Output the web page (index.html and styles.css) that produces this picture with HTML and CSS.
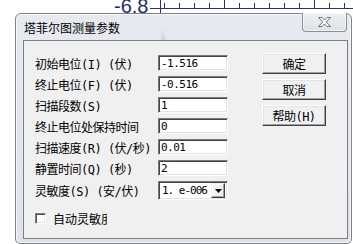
FILE: index.html
```html
<!DOCTYPE html>
<html lang="zh-CN">
<head>
    <meta charset="UTF-8">
    <title>塔菲尔图测量参数</title>
    <link rel="stylesheet" href="styles.css">
</head>
<body>
<div class="desk">
    <!-- chart behind the dialog -->
    <svg class="chart" width="353" height="244" viewBox="0 0 353 244">
        <text x="114" y="13" class="axis_num">-6.8</text>
        <line x1="150" y1="8.5" x2="353" y2="8.5" class="axis"/>
        <line x1="160.5" y1="0" x2="160.5" y2="244" class="axis"/>
        <g class="axis">
            <line x1="164.5" y1="3" x2="164.5" y2="8"/>
            <line x1="179.5" y1="3" x2="179.5" y2="8"/>
            <line x1="194.5" y1="3" x2="194.5" y2="8"/>
            <line x1="209.5" y1="3" x2="209.5" y2="8"/>
            <line x1="224.5" y1="0" x2="224.5" y2="8"/>
            <line x1="239.5" y1="3" x2="239.5" y2="8"/>
            <line x1="254.5" y1="3" x2="254.5" y2="8"/>
            <line x1="269.5" y1="3" x2="269.5" y2="8"/>
            <line x1="284.5" y1="3" x2="284.5" y2="8"/>
            <line x1="299.5" y1="3" x2="299.5" y2="8"/>
            <line x1="314.5" y1="0" x2="314.5" y2="8"/>
            <line x1="329.5" y1="3" x2="329.5" y2="8"/>
            <line x1="344.5" y1="3" x2="344.5" y2="8"/>
        </g>
    </svg>

    <div class="win">
        <div class="title_bar">
            <span class="title_text">塔菲尔图测量参数</span>
            <div class="close_btn">
                <svg width="15" height="12" viewBox="0 0 15 12">
                    <path d="M1.5 1.5h3.5l2.5 2.6 2.5-2.6h3.5l-4.2 4.5 4.2 4.5h-3.5l-2.5-2.6-2.5 2.6h-3.5l4.2-4.5z" fill="#fafafa" stroke="#6e747c" stroke-width="1" stroke-linejoin="round"/>
                </svg>
            </div>
        </div>

        <div class="client">
            <div class="left_col">
                <div class="form_grid">
                    <label>初始电位(I) (伏)</label>
                    <input type="text" class="field" value="-1.516">
                    <label>终止电位(F) (伏)</label>
                    <input type="text" class="field" value="-0.516">
                    <label>扫描段数(S)</label>
                    <input type="text" class="field" value="1">
                    <label>终止电位处保持时间</label>
                    <input type="text" class="field" value="0">
                    <label>扫描速度(R) (伏/秒)</label>
                    <input type="text" class="field" value="0.01">
                    <label>静置时间(Q) (秒)</label>
                    <input type="text" class="field" value="2">
                    <label>灵敏度(S) (安/伏)</label>
                    <div class="combo">
                        <span class="combo_val">1. e-006</span>
                        <span class="combo_btn">
                            <svg width="7" height="4" viewBox="0 0 7 4"><path d="M0 0h7l-3.5 4z" fill="#000"/></svg>
                        </span>
                    </div>
                </div>
                <div class="check_row">
                    <span class="check_box"></span>
                    <span class="check_text">自动灵敏度</span>
                </div>
            </div>

            <div class="btn_col">
                <button class="win_btn">确定</button>
                <button class="win_btn">取消</button>
                <button class="win_btn">帮助(H)</button>
            </div>
        </div>
    </div>
</div>
</body>
</html>
```

FILE: styles.css
```css
body{
    margin: 0;
    background: #fff;
    font-family: "DejaVu Sans Mono", "Noto Sans CJK SC", sans-serif;
    font-size: 12px;
    color: #000;
}
.desk{
    position: relative;
    width: 353px;
    height: 244px;
    overflow: hidden;
    background: #fff;
}
.chart{
    display: block;
}
.axis_num{
    font-family: "Liberation Sans", sans-serif;
    font-size: 20px;
    fill: #1f2a66;
}
.axis{
    stroke: #27327a;
    stroke-width: 1;
}

/* dialog window */
.win{
    position: absolute;
    left: 15px;
    top: 13px;
    width: 337px;
    height: 231px;
    box-sizing: border-box;
    padding: 0 3px 4px 7px;
    border: 1px solid #7c828a;
    border-radius: 6px 6px 5px 5px;
    background:
        radial-gradient(ellipse 70px 5px at 240px 31px, rgba(232, 160, 170, 0.35), transparent),
        radial-gradient(ellipse 4px 14px at 147px 28px, rgba(120, 130, 200, 0.25), transparent),
        linear-gradient(#e6e9ee, #dfe3e8);
    box-shadow: inset 0 0 0 1px rgba(255, 255, 255, 0.7);
}
.title_bar{
    position: relative;
    height: 26px;
    display: flex;
    align-items: center;
    padding-left: 1px;
}
.title_text{
    font-family: "Noto Sans CJK SC", sans-serif;
    font-size: 12px;
    margin-top: 1px;
}
.close_btn{
    position: absolute;
    left: 279px;
    top: -1px;
    width: 45px;
    height: 19px;
    box-sizing: border-box;
    border: 1px solid #8a9098;
    border-top: none;
    border-radius: 0 0 4px 4px;
    background: linear-gradient(#eef0f3, #dde1e6);
    box-shadow: inset 0 0 0 1px rgba(255, 255, 255, 0.6);
    display: flex;
    justify-content: center;
    align-items: center;
}

.client{
    height: 199px;
    box-sizing: border-box;
    border: 1px solid #7a7f86;
    background: #f0f0f0;
    display: flex;
    padding: 12px 0 0 11px;
}
.left_col{
    display: flex;
    flex-direction: column;
}
.form_grid{
    display: grid;
    grid-template-columns: 123px 70px;
    grid-template-rows: repeat(6, 16px) 19px;
    row-gap: 5px;
    margin-top: 2px;
}
.form_grid label{
    display: flex;
    align-items: center;
    white-space: nowrap;
    letter-spacing: -0.5px;
}
.field{
    width: 70px;
    height: 16px;
    box-sizing: border-box;
    margin: 0;
    padding: 0 0 0 2px;
    border: 1px solid;
    border-color: #7a7a7a #fff #fff #7a7a7a;
    box-shadow: inset 1px 1px 0 #454545, inset -1px -1px 0 #e3e3e3;
    background: #fff;
    font-family: "DejaVu Sans Mono", monospace;
    font-size: 11px;
    letter-spacing: -0.5px;
    color: #000;
    outline: none;
}
.combo{
    display: flex;
    align-items: center;
    width: 70px;
    height: 19px;
    box-sizing: border-box;
    border: 1px solid;
    border-color: #7a7a7a #fff #fff #7a7a7a;
    box-shadow: inset 1px 1px 0 #454545, inset -1px -1px 0 #e3e3e3;
    background: #fff;
    padding: 2px 2px 2px 3px;
}
.combo_val{
    flex: 1;
    white-space: nowrap;
    font-family: "DejaVu Sans Mono", monospace;
    font-size: 11px;
    letter-spacing: -1px;
}
.combo_btn{
    width: 14px;
    height: 15px;
    box-sizing: border-box;
    border: 1px solid;
    border-color: #f0f0f0 #404040 #404040 #f0f0f0;
    box-shadow: inset -1px -1px 0 #a0a0a0, inset 1px 1px 0 #fff;
    background: #f0f0f0;
    display: flex;
    justify-content: center;
    align-items: center;
}

.check_row{
    display: flex;
    align-items: center;
    margin-top: 10px;
    gap: 7px;
}
.check_box{
    width: 11px;
    height: 11px;
    box-sizing: border-box;
    border: 1px solid;
    border-color: #808080 #fff #fff #808080;
    box-shadow: inset 1px 1px 0 #505050, inset -1px -1px 0 #e3e3e3;
    background: #fff;
}
.check_text{
    width: 54px;
    overflow: hidden;
    white-space: nowrap;
    font-family: "Noto Sans CJK SC", sans-serif;
}

.btn_col{
    display: flex;
    flex-direction: column;
    gap: 5px;
    margin-left: 34px;
}
.win_btn{
    width: 64px;
    height: 21px;
    margin: 0;
    padding: 0;
    box-sizing: border-box;
    border: 1px solid;
    border-color: #fff #404040 #404040 #fff;
    box-shadow: inset -1px -1px 0 #a0a0a0, inset 1px 1px 0 #e3e3e3;
    background: #f0f0f0;
    font-family: "DejaVu Sans Mono", "Noto Sans CJK SC", sans-serif;
    font-size: 12px;
    letter-spacing: -0.5px;
    color: #000;
}
```
